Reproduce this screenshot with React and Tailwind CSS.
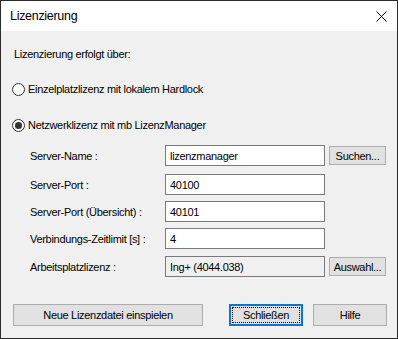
import React from "react";

function Radio({ checked, label, className = "" }) {
  return (
    <div className={"flex items-center h-[16px] " + className}>
      <div className="w-[13px] h-[13px] rounded-full border border-[#333333] bg-white flex items-center justify-center">
        {checked && <div className="w-[7px] h-[7px] rounded-full bg-[#333333]" />}
      </div>
      <span className="ml-[3px] leading-[16px]">{label}</span>
    </div>
  );
}

function Field({ label, value, readOnly, button, className = "" }) {
  return (
    <div className={"flex items-center h-[21px] " + className}>
      <div className="w-[135px] shrink-0 leading-[16px]">{label}</div>
      <div
        className={
          "w-[160px] h-[21px] border border-[#7a7a7a] pl-[4px] flex items-center leading-[16px] " +
          (readOnly ? "bg-[#f0f0f0]" : "bg-white")
        }
      >
        {value}
      </div>
      {button && (
        <div className="ml-[4px] w-[57px] h-[19px] border border-[#adadad] bg-[#e1e1e1] flex items-center justify-center leading-[16px]">
          {button}
        </div>
      )}
    </div>
  );
}

export default function App() {
  return (
    <div
      className="w-[398px] h-[339px] border border-[#2b2b2b] bg-[#f0f0f0] flex flex-col text-[11px] tracking-[-0.3px] text-black"
      style={{ fontFamily: "'Liberation Sans', Arial, sans-serif" }}
    >
      <div className="h-[30px] shrink-0 bg-white flex items-center justify-between pl-[9px] pr-[10px]">
        <span className="leading-[16px] text-[12.5px]">Lizenzierung</span>
        <svg width="11" height="11" viewBox="0 0 11 11">
          <path d="M0.5 0.5 L10.5 10.5 M10.5 0.5 L0.5 10.5" stroke="#000" strokeWidth="1" />
        </svg>
      </div>
      <div className="flex flex-col pl-[11px]">
        <div className="mt-[15px] h-[16px] leading-[16px] pl-[2px]">Lizenzierung erfolgt über:</div>
        <Radio className="mt-[19px]" label="Einzelplatzlizenz mit lokalem Hardlock" />
        <Radio className="mt-[20px]" checked label="Netzwerklizenz mit mb LizenzManager" />
        <div className="flex flex-col pl-[18px]">
          <Field className="mt-[12px]" label="Server-Name :" value="lizenzmanager" button="Suchen..." />
          <Field className="mt-[8px]" label="Server-Port :" value="40100" />
          <Field className="mt-[6px]" label="Server-Port (Übersicht) :" value="40101" />
          <Field className="mt-[6px]" label="Verbindungs-Zeitlimit [s] :" value="4" />
          <Field className="mt-[7px]" label="Arbeitsplatzlizenz :" value="Ing+ (4044.038)" readOnly button="Auswahl..." />
        </div>
        <div className="mt-[27px] flex items-center">
          <div className="ml-[1px] w-[190px] h-[22px] border border-[#adadad] bg-[#e1e1e1] flex items-center justify-center leading-[16px]">
            Neue Lizenzdatei einspielen
          </div>
          <div className="ml-[26px] w-[74px] h-[22px] border-2 border-[#0078d7] bg-[#e1e1e1] p-[1px] flex">
            <div className="flex-1 border border-dotted border-black flex items-center justify-center leading-[16px]">
              Schließen
            </div>
          </div>
          <div className="ml-[10px] w-[74px] h-[22px] border border-[#adadad] bg-[#e1e1e1] flex items-center justify-center leading-[16px]">
            Hilfe
          </div>
        </div>
      </div>
    </div>
  );
}
